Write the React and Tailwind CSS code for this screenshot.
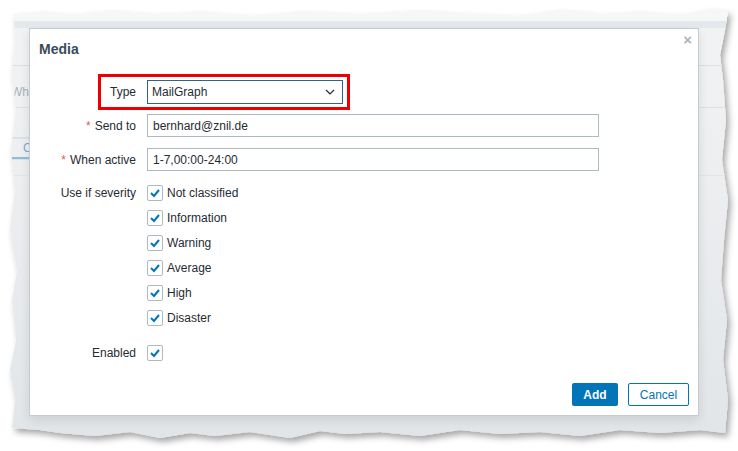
import React from "react";

const FONT = { fontFamily: '"Liberation Sans", Arial, sans-serif' };

const TOP = "14,14 40,12 70,15 110,11 150,14 200,12 250,16 300,12 360,14 420,11 470,14 520,16 560,10 600,14 640,12 680,15 710,9 728,11";
const RIGHT = "725,30 720,55 723,80 726,120 722,160 728,200 724,240 721,280 727,320 723,360 728,400 725,433";
const BOTTOM = "700,430 660,433 620,430 580,436 540,432 500,434 460,430 420,436 380,432 345,434 320,431 290,438 250,432 215,436 190,433 160,438 130,432 95,436 60,433 40,430 12,428";
const LEFT = "15,400 10,370 16,340 12,300 17,270 10,230 15,190 11,150 16,110 12,70 15,40";
const PAPER = `${TOP} ${RIGHT} ${BOTTOM} ${LEFT}`;

// torn-paper backdrop with the page behind the dialog
const Paper = () => (
  <svg className="absolute inset-0" width="738" height="451" viewBox="0 0 738 451">
    <defs>
      <filter id="tear" x="-5%" y="-5%" width="110%" height="115%">
        <feDropShadow dx="3" dy="4" stdDeviation="3" floodColor="#000" floodOpacity="0.35" />
      </filter>
      <linearGradient id="shade" x1="0" y1="0" x2="0" y2="1">
        <stop offset="0" stopColor="#f2f3f4" />
        <stop offset="0.4" stopColor="#eceef0" />
        <stop offset="1" stopColor="#e2e5e8" />
      </linearGradient>
      <clipPath id="paperClip">
        <polygon points={PAPER} />
      </clipPath>
    </defs>
    <polygon points={PAPER} fill="url(#shade)" filter="url(#tear)" />
    <g clipPath="url(#paperClip)">
      <rect x="0" y="0" width="738" height="21" fill="#f6f7f7" />
      <rect x="0" y="21" width="738" height="7" fill="#e6e9eb" />
      <rect x="0" y="28" width="738" height="37" fill="#f1f2f3" />
      <rect x="0" y="65" width="738" height="1" fill="#dde1e4" />
      <rect x="0" y="107" width="738" height="1" fill="#dde1e4" />
      <text x="11" y="96" fontSize="12" fill="#a8b2b9" style={FONT}>Wh</text>
      <rect x="4" y="138" width="40" height="21" fill="none" stroke="#cdd4d8" />
      <rect x="4" y="157" width="40" height="2" fill="#8fbde0" />
      <text x="23" y="152" fontSize="12" fill="#7aa9d0" style={FONT}>C</text>
      <rect x="0" y="175" width="738" height="1" fill="#e3e6e8" />
    </g>
  </svg>
);

const Check = () => (
  <span className="flex h-[16px] w-[16px] shrink-0 items-center justify-center rounded-[2px] border border-[#acbbc2] bg-white">
    <svg width="12" height="12" viewBox="0 0 12 12">
      <polyline points="2,6 5,9 10,3" fill="none" stroke="#0275b8" strokeWidth="2" />
    </svg>
  </span>
);

const Label = ({ children, required }) => (
  <div className="w-[107px] shrink-0 pr-[11px] text-right whitespace-nowrap">
    {required && <span className="mr-[4px] text-[#e45959]">*</span>}
    {children}
  </div>
);

const severities = ["Not classified", "Information", "Warning", "Average", "High", "Disaster"];

export default function App() {
  return (
    <div className="relative h-[451px] w-[738px] overflow-hidden bg-white text-[12px] text-[#1f2c33]" style={FONT}>
      <Paper />

      <div className="absolute left-[29px] top-[28px] flex h-[388px] w-[670px] flex-col border border-[#c5cbd0] bg-white shadow-[0_4px_10px_rgba(0,0,0,0.10)]">
        {/* Header */}
        <div className="relative px-[9px] pt-[11px]">
          <h4 className="text-[14px] leading-[18px] font-bold text-[#384b5a]">Media</h4>
          <span className="absolute right-[6px] top-[3px] text-[15px] leading-[15px] font-bold text-[#a9b5bc]">×</span>
        </div>

        {/* Form */}
        <div className="relative mt-[22px] flex flex-col">
          <div className="absolute left-[68px] top-[-6px] h-[36px] w-[252px] border-[3px] border-[#ee0000]" />

          <div className="flex h-[24px] items-center pl-[10px]">
            <Label>Type</Label>
            <div className="flex h-[24px] w-[196px] items-center justify-between border border-[#2d6291] pl-[4px] pr-[7px]">
              <span>MailGraph</span>
              <svg width="10" height="6" viewBox="0 0 10 6">
                <polyline points="1,1 5,5 9,1" fill="none" stroke="#1f2c33" strokeWidth="1.2" />
              </svg>
            </div>
          </div>

          <div className="mt-[10px] flex h-[23px] items-center pl-[10px]">
            <Label required>Send to</Label>
            <div className="flex h-[23px] w-[452px] items-center border border-[#acbbc2] pl-[5px]">bernhard@znil.de</div>
          </div>

          <div className="mt-[11px] flex h-[23px] items-center pl-[10px]">
            <Label required>When active</Label>
            <div className="flex h-[23px] w-[452px] items-center border border-[#acbbc2] pl-[5px]">1-7,00:00-24:00</div>
          </div>

          <div className="mt-[14px] flex pl-[10px]">
            <div className="flex h-[16px] items-center">
              <Label>Use if severity</Label>
            </div>
            <div className="flex flex-col gap-[9px]">
              {severities.map((s) => (
                <div key={s} className="flex h-[16px] items-center gap-[4px]">
                  <Check />
                  <span>{s}</span>
                </div>
              ))}
            </div>
          </div>

          <div className="mt-[19px] flex h-[16px] items-center pl-[10px]">
            <Label>Enabled</Label>
            <Check />
          </div>
        </div>

        {/* Footer */}
        <div className="mt-auto flex justify-end gap-[10px] pb-[9px] pr-[9px]">
          <button className="h-[23px] w-[46px] rounded-[2px] bg-[#0275b8] font-bold text-white">Add</button>
          <button className="h-[23px] w-[61px] rounded-[2px] border border-[#0275b8] bg-white text-[#0275b8]">Cancel</button>
        </div>
      </div>
    </div>
  );
}
